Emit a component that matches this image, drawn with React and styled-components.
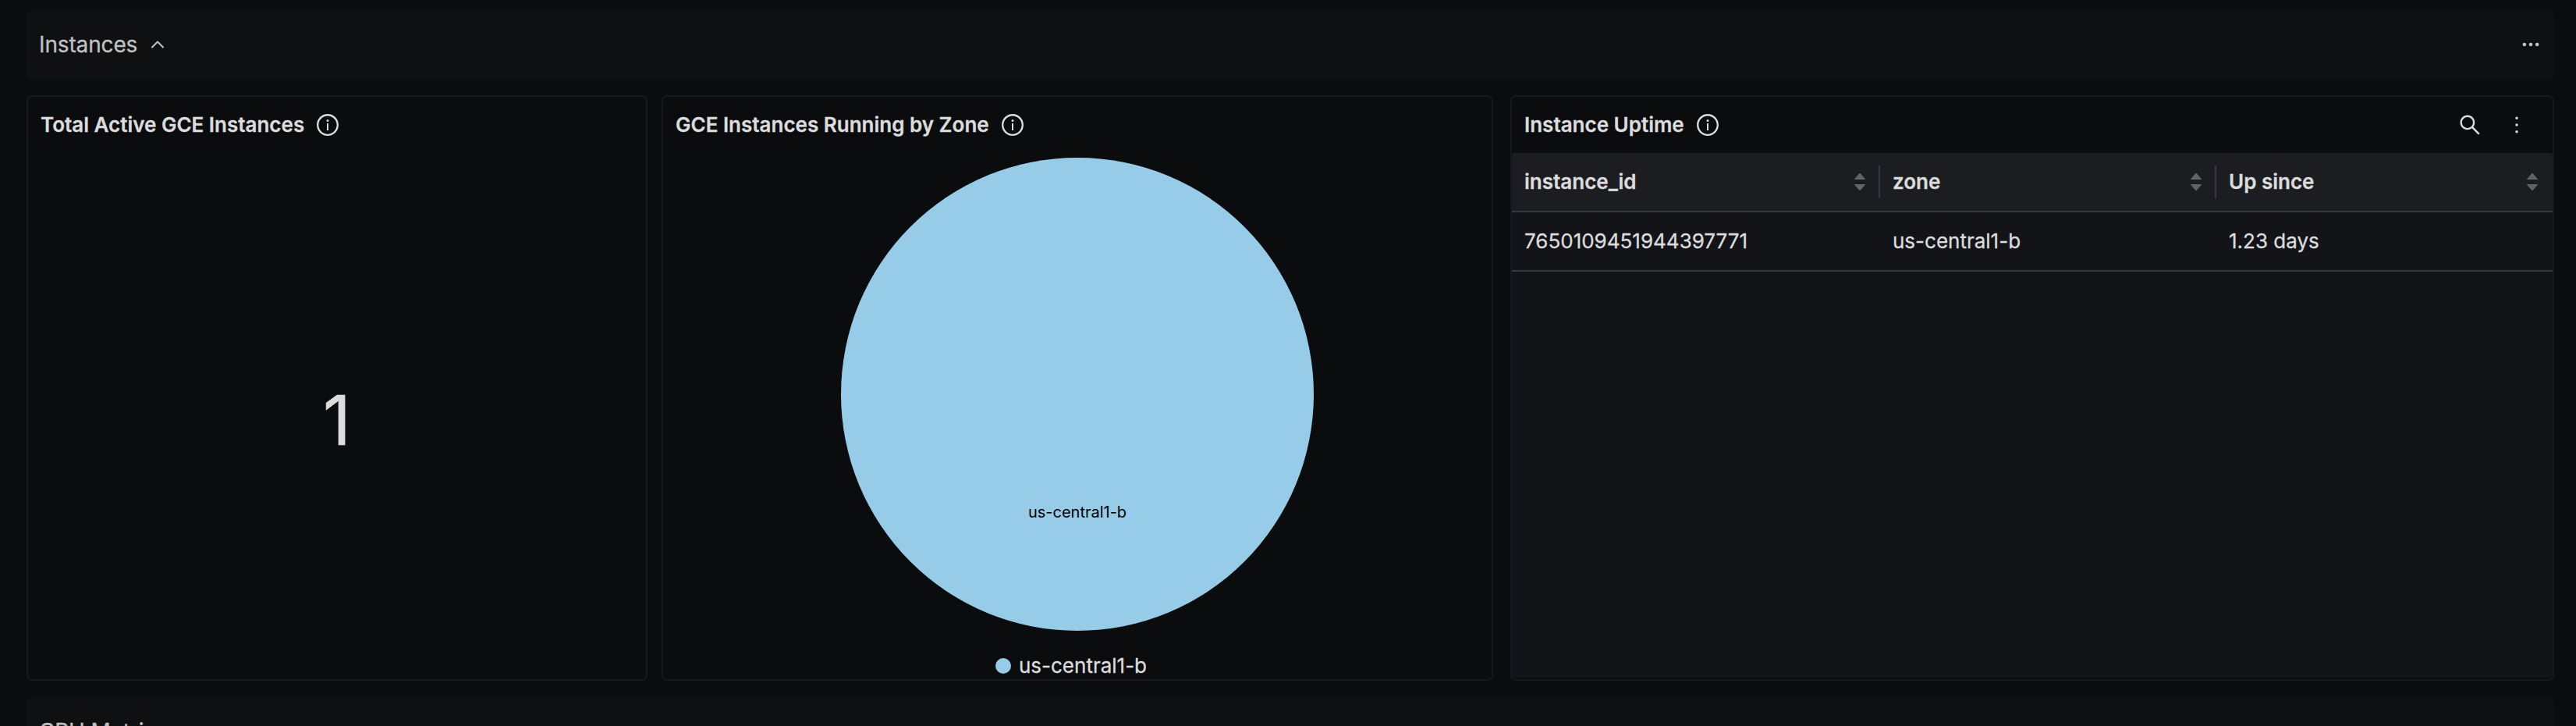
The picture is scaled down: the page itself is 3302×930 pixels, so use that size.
import React from "react";
import styled, { createGlobalStyle } from "styled-components";
import { ChevronUp, Ellipsis } from "lucide-react";
import { AiOutlineInfoCircle, AiOutlineMore, AiOutlineSearch } from "react-icons/ai";

const GlobalStyle = createGlobalStyle`
  *, *::before, *::after { box-sizing: border-box; }
  html, body { margin: 0; }
  body {
    height: 930px;
    overflow: hidden;
    background: #0b0c0e;
    color: #dcdcdc;
    font-family: Inter, "Liberation Sans", sans-serif;
    font-size: 26px;
    line-height: 44px;
    -webkit-text-stroke: 0.3px currentColor;
  }
  svg { display: block; flex: none; }
`;

const Dashboard = styled.main`
  display: flex;
  flex-direction: column;
  gap: 20px;
  height: 930px;
  overflow: hidden;
  padding: 12px 28px 0 34px;
`;

const SectionBar = styled.header`
  display: flex;
  flex: none;
  align-items: center;
  justify-content: space-between;
  height: 90px;
  padding: 0 16px;
  border-radius: 8px;
  background: #0e1011;
  color: #c0c1c3;
`;

const SectionTitle = styled.div`
  display: flex;
  align-items: center;
  gap: 12px;
  font-size: 28px;
  letter-spacing: -0.14px;
`;

const Panels = styled.section`
  display: grid;
  flex: none;
  grid-template-columns: 796px 1066px 1fr;
  column-gap: 18px;
  height: 750px;
`;

const Card = styled.article`
  display: flex;
  flex-direction: column;
  min-width: 0;
  border: 2px solid #16181f;
  border-radius: 7px;
  overflow: hidden;

  &:last-child {
    margin-left: 4px;
  }
`;

const CardHeader = styled.div`
  display: flex;
  flex: none;
  align-items: center;
  justify-content: space-between;
  height: 72px;
  padding: 0 30px 0 16px;
`;

const CardTitle = styled.h2`
  display: flex;
  align-items: center;
  gap: 14px;
  margin: 0;
  font-size: 26px;
  font-weight: 600;
`;

const Actions = styled.div`
  display: flex;
  gap: 28px;
`;

const BigValue = styled.div`
  display: flex;
  flex: 1;
  align-items: center;
  justify-content: center;
  padding-top: 10px;
  font-size: 88px;
  line-height: 108px;
  -webkit-text-stroke-width: 0.6px;
`;

const PieArea = styled.div`
  display: flex;
  justify-content: center;
  padding-top: 6px;
`;

const SliceLabel = styled.text`
  fill: #000;
  font-size: 20px;
  text-anchor: middle;
  -webkit-text-stroke: 0.3px #000;
`;

const Legend = styled.div`
  display: flex;
  flex: 1;
  align-items: center;
  justify-content: center;
  gap: 10px;
  padding: 28px 16px 0 0;
  line-height: 34px;
`;

const Swatch = styled.span`
  width: 20px;
  height: 20px;
  border-radius: 50%;
  background: ${(p) => p.$color};
`;

const TableArea = styled.div`
  flex: 1;
  margin-bottom: 2px;
  border-radius: 4px 4px 0 0;
  background: #121417;
  overflow: hidden;
`;

const TableRow = styled.div`
  display: grid;
  grid-template-columns: 472px 431px 431px;
  height: 76px;
  border-bottom: 2px solid #353a42;
  background: ${(p) => (p.$head ? "#1c1d20" : "transparent")};
  font-weight: ${(p) => (p.$head ? 600 : 400)};
`;

const Cell = styled.div`
  display: flex;
  align-items: center;
  padding-left: 16px;
`;

const HeadCell = styled(Cell)`
  justify-content: space-between;
`;

const SortControl = styled.div`
  display: flex;
  align-items: center;
  height: 42px;
  padding-right: ${(p) => (p.$last ? 19 : 17)}px;
  border-right: ${(p) => (p.$last ? "none" : "2px solid #353a42")};
`;

const Sorter = () => (
  <svg width="14" height="22" viewBox="0 0 14 22" fill="#626366">
    <path d="M6.3.3Q7-.4 7.7.3L13.7 7.1Q14.2 8.1 13.3 8.1H.7Q-.2 8.1 .3 7.1Z" />
    <path d="M6.3 21.7Q7 22.4 7.7 21.7L13.7 14.9Q14.2 13.9 13.3 13.9H.7Q-.2 13.9 .3 14.9Z" />
  </svg>
);

const Section = ({ title }) => (
  <SectionBar>
    <SectionTitle>
      {title}
      <ChevronUp size={28} strokeWidth={1.8} />
    </SectionTitle>
    <Ellipsis size={28} />
  </SectionBar>
);

const Panel = ({ title, actions, children }) => (
  <Card>
    <CardHeader>
      <CardTitle>
        {title}
        <AiOutlineInfoCircle size={32} />
      </CardTitle>
      {actions}
    </CardHeader>
    {children}
  </Card>
);

const columns = ["instance_id", "zone", "Up since"];
const rows = [["7650109451944397771", "us-central1-b", "1.23 days"]];
const sliceColor = "#96cce8";

export default function App() {
  return (
    <>
      <GlobalStyle />
      <Dashboard>
        <Section title="Instances" />
        <Panels>
          <Panel title="Total Active GCE Instances">
            <BigValue>1</BigValue>
          </Panel>
          <Panel title="GCE Instances Running by Zone">
            <PieArea>
              <svg width="606" height="606" viewBox="0 0 606 606">
                <circle cx="303" cy="303" r="303" fill={sliceColor} />
                <SliceLabel x="303" y="461">us-central1-b</SliceLabel>
              </svg>
            </PieArea>
            <Legend>
              <Swatch $color={sliceColor} />
              us-central1-b
            </Legend>
          </Panel>
          <Panel
            title="Instance Uptime"
            actions={
              <Actions>
                <AiOutlineSearch size={32} />
                <AiOutlineMore size={32} />
              </Actions>
            }
          >
            <TableArea>
              <TableRow $head>
                {columns.map((name, i) => (
                  <HeadCell key={name}>
                    {name}
                    <SortControl $last={i === columns.length - 1}>
                      <Sorter />
                    </SortControl>
                  </HeadCell>
                ))}
              </TableRow>
              {rows.map((row) => (
                <TableRow key={row[0]}>
                  {row.map((value) => (
                    <Cell key={value}>{value}</Cell>
                  ))}
                </TableRow>
              ))}
            </TableArea>
          </Panel>
        </Panels>
        <Section title="CPU Metrics" />
      </Dashboard>
    </>
  );
}
